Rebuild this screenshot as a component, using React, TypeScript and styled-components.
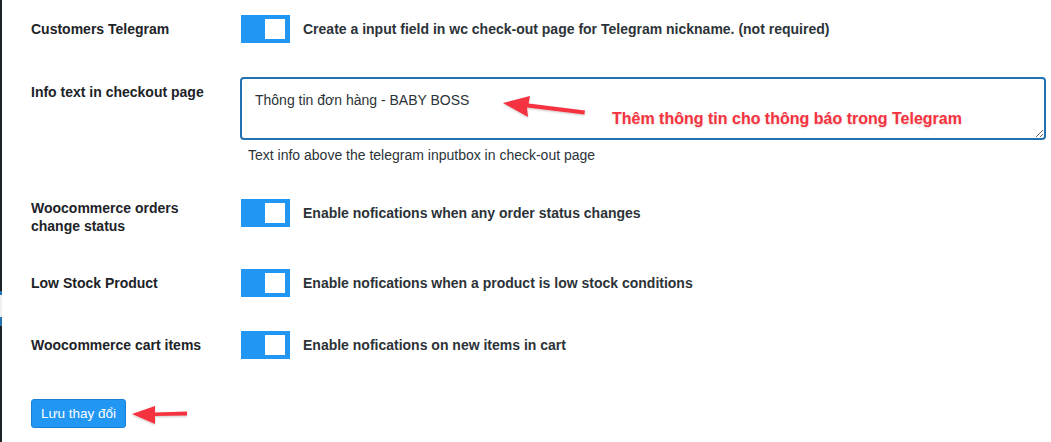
import React, { useEffect, useRef } from "react";
import styled, { createGlobalStyle } from "styled-components";

const Global = createGlobalStyle`
  html, body { margin: 0; padding: 0; background: #ffffff; }
  body { font-family: "Liberation Sans", Arial, sans-serif; color: #1d2327; }
  * { box-sizing: border-box; }
`;

const Page = styled.div`
  position: relative;
  display: flex;
  width: 1051px;
  height: 442px;
  overflow: hidden;
  background: #fff;
`;

const SideEdge = styled.div`
  width: 2px;
  flex: none;
  display: flex;
  flex-direction: column;
  background: #1d2327;
`;

const EdgeSeg = styled.div<{ $h: number; $c: string }>`
  height: ${(p) => p.$h}px;
  background: ${(p) => p.$c};
  flex: none;
`;

const Main = styled.div`
  flex: 1;
  padding: 15px 0 0 29px;
  display: flex;
  flex-direction: column;
  gap: 34px;
`;

const Row = styled.div`
  display: grid;
  grid-template-columns: 209px 1fr;
  align-items: start;
`;

const Label = styled.div<{ $top?: number }>`
  margin-top: ${(p) => p.$top ?? 5}px;
  font-size: 14px;
  font-weight: 700;
  line-height: 18px;
  color: #1d2327;
`;

const ToggleLine = styled.div<{ $top?: number }>`
  display: flex;
  align-items: center;
  gap: 13px;
  margin-top: ${(p) => p.$top ?? 0}px;
  margin-left: 1px;
`;

const Toggle = styled.div`
  width: 49px;
  height: 28px;
  flex: none;
  background: #2196f3;
  display: flex;
  justify-content: flex-end;
  align-items: flex-start;
  padding: 4px 5px 0 0;
`;

const Knob = styled.div`
  width: 20px;
  height: 20px;
  background: #ffffff;
`;

const Desc = styled.span`
  font-size: 14px;
  font-weight: 700;
  color: #2c3338;
  line-height: 18px;
`;

const FieldCol = styled.div`
  position: relative;
  display: flex;
  flex-direction: column;
`;

const TextArea = styled.textarea`
  width: 806px;
  height: 63px;
  border: 2px solid #2271b1;
  border-radius: 4px;
  padding: 12px 13px;
  font-family: "Liberation Sans", Arial, sans-serif;
  font-size: 14px;
  line-height: 18px;
  color: #2c3338;
  caret-color: #1d2327;
  outline: none;
  resize: vertical;
  margin: 0;
  display: block;
  background: #fff;
`;

const Help = styled.p`
  margin: 6px 0 0 8px;
  font-size: 14px;
  line-height: 19px;
  color: #2c3338;
`;

const Annotation = styled.span`
  position: absolute;
  left: 372px;
  top: 33px;
  font-size: 16px;
  font-weight: 700;
  color: #f5333f;
  text-shadow: 0 1px 2px rgba(120, 0, 0, 0.18);
  white-space: nowrap;
  pointer-events: none;
`;

const SaveButton = styled.button`
  align-self: flex-start;
  margin-top: 6px;
  width: 95px;
  height: 29px;
  background: #2196f3;
  border: 1px solid #1a7fd4;
  border-radius: 3px;
  color: #ffffff;
  font-family: "Liberation Sans", Arial, sans-serif;
  font-size: 13.5px;
  padding: 0;
  cursor: pointer;
`;

const Overlay = styled.svg`
  position: absolute;
  left: 0;
  top: 0;
  pointer-events: none;
`;

type ToggleRowProps = { label: React.ReactNode; desc: string; labelTop?: number; toggleTop?: number };

function ToggleRow({ label, desc, labelTop, toggleTop }: ToggleRowProps) {
  return (
    <Row>
      <Label $top={labelTop}>{label}</Label>
      <ToggleLine $top={toggleTop}>
        <Toggle>
          <Knob />
        </Toggle>
        <Desc>{desc}</Desc>
      </ToggleLine>
    </Row>
  );
}

export default function App() {
  const ref = useRef<HTMLTextAreaElement>(null);
  useEffect(() => {
    const el = ref.current;
    if (el) {
      el.focus();
      const n = el.value.length;
      el.setSelectionRange(n, n);
    }
  }, []);

  return (
    <>
      <Global />
      <Page>
        <SideEdge>
          <EdgeSeg $h={291} $c="#1d2327" />
          <EdgeSeg $h={4} $c="#2271b1" />
          <EdgeSeg $h={22} $c="#f0f0f1" />
          <EdgeSeg $h={9} $c="#2271b1" />
        </SideEdge>
        <Main>
          <ToggleRow
            label="Customers Telegram"
            desc="Create a input field in wc check-out page for Telegram nickname. (not required)"
          />
          <Row>
            <Label $top={6}>Info text in checkout page</Label>
            <FieldCol>
              <TextArea ref={ref} defaultValue="Thông tin đơn hàng - BABY BOSS" />
              <Annotation>Thêm thông tin cho thông báo trong Telegram</Annotation>
              <Help>Text info above the telegram inputbox in check-out page</Help>
            </FieldCol>
          </Row>
          <ToggleRow
            label={
              <>
                Woocommerce orders
                <br />
                change status
              </>
            }
            desc="Enable nofications when any order status changes"
            labelTop={0}
            toggleTop={0}
          />
          <ToggleRow label="Low Stock Product" desc="Enable nofications when a product is low stock conditions" />
          <ToggleRow label="Woocommerce cart items" desc="Enable nofications on new items in cart" />
          <SaveButton>Lưu thay đổi</SaveButton>
        </Main>
        <Overlay width="1051" height="442" viewBox="0 0 1051 442">
          <defs>
            <filter id="sh" x="-20%" y="-50%" width="140%" height="200%">
              <feDropShadow dx="0" dy="1" stdDeviation="1.2" floodColor="#000" floodOpacity="0.22" />
            </filter>
          </defs>
          <g fill="#f5333f" filter="url(#sh)">
            <polygon points="585,110.5 584.4,114.5 527,107.5 528,117 503,103 530,96 528.6,103.5" />
            <polygon points="187,411.5 187,415.5 155,416 155,424 132,414 155,406 155,412.5" />
          </g>
        </Overlay>
      </Page>
    </>
  );
}
